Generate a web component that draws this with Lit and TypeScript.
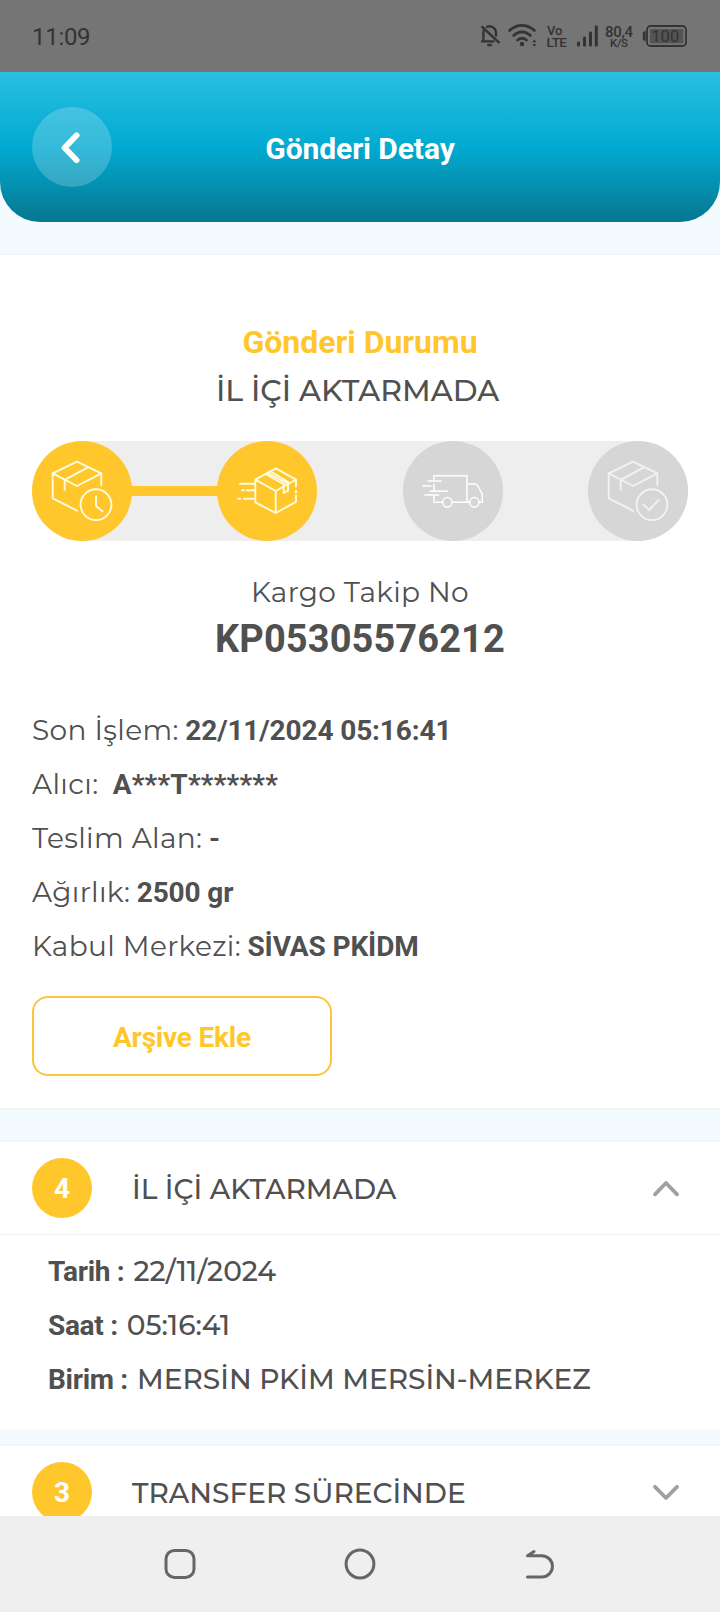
import { LitElement, html, svg, css, nothing } from "lit";
import { customElement, property } from "lit/decorators.js";
import { classMap } from "lit/directives/class-map.js";

const boxBody = svg`
  <path d="M45 69.7 L20.7 57.3 V32.3 L45 20.7 L69.3 32.3 V44.3 M20.7 32.3 L45 45 L69.3 32.3 M56 26.4 L32.7 38.8 V48.7"/>`;

const stepIcons: Record<string, unknown> = {
  waiting: svg`${boxBody}
    <circle cx="64" cy="63.7" r="15.4"/>
    <path d="M64 55.3 V65 L70.4 70.3"/>`,
  moving: svg`
    <path d="M58.7 27.4 L38.3 38.7 V61.3 L58.7 72 L79 60.9 V54.8 M79 45.6 V38.7 L58.7 27.4 M38.3 38.7 L58.7 50 L79 38.7 M58.7 50 V72 M79 50 V51.6"/>
    <path d="M48.7 33 L66.7 43.3 V52 L71 49.7 V41 L53.3 30.3 M50.9 31.8 L69 42"/>
    <path d="M23 42.7 H38 M25 49.3 H27 M29.7 49.3 H38 M21 57.7 H23.2 M27 57.7 H38"/>`,
  truck: svg`
    <path d="M31 39 V34.7 H64 V61.3 M31 43.3 V49.5 M31 54.3 V61.3 H39.5 M49.3 61.3 H66.5 M76 61.3 H79.3 V53.3 L75.6 46 Q74 43 72 43 H64"/>
    <circle cx="44.3" cy="61.3" r="4.7"/>
    <circle cx="71.3" cy="61.3" r="4.7"/>
    <path d="M25.3 40 H38 M20 45 H27.7 M27 50.3 H44.7 M22 54 H35.7"/>`,
  delivered: svg`${boxBody}
    <circle cx="64" cy="63.7" r="15.4"/>
    <path d="M55.7 64 L61.3 69 L70.7 58.9"/>`,
};

@customElement("status-bar")
class StatusBar extends LitElement {
  static styles = css`
    :host { display: flex; justify-content: space-between; height: 72px; background: #757575; color: #333; font-family: Roboto, sans-serif; }
    .clock { padding-left: 32px; font-size: 24px; line-height: 74px; letter-spacing: -0.3px; }
    .icons { display: block; }
    .line { fill: none; stroke: #333; stroke-width: 2.4; stroke-linecap: round; stroke-linejoin: round; }
    .wave { stroke-width: 2.8; }
    .bold { font-weight: 500; }
  `;
  render() {
    return html`
      <span class="clock">11:09</span>
      <svg class="icons" width="260" height="72" fill="#333">
        <g class="line">
          <path d="M23.4 40.5 V32.5 Q23.4 30.6 24.4 29.4 M22 41.4 H33.5 M27 26.8 Q29.3 25.8 31.5 26.6 Q36 28.2 36 33 V35.5 M22.3 27 L38.8 42.3"/>
          <path d="M28.3 45 H31"/>
        </g>
        <g class="line wave">
          <path d="M49.6 30.4 Q62 20.4 74.4 30.4"/>
          <path d="M53.7 35.4 Q62 28.4 70.4 35.4"/>
          <path d="M57.6 40 Q62 36.4 66.4 40"/>
        </g>
        <circle cx="62" cy="44" r="2.2"/>
        <path d="M72.3 42.2 L74.4 39.6 L76.5 42.2 Z M72.3 44 L74.4 46.6 L76.5 44 Z"/>
        <text class="bold" x="87" y="34.6" font-size="13">Vo</text>
        <text class="bold" x="86.5" y="46.7" font-size="13.5" textLength="20.5">LTE</text>
        <rect x="117" y="41.5" width="3" height="5" rx="1.2"/>
        <rect x="123" y="36.5" width="3" height="10" rx="1.2"/>
        <rect x="129" y="31.5" width="3" height="15" rx="1.2"/>
        <rect x="134.8" y="25.5" width="3" height="21" rx="1.2"/>
        <text x="145" y="36.8" font-size="15" class="bold" textLength="28">80,4</text>
        <text x="150" y="47" font-size="11.5" class="bold" textLength="18">K/S</text>
        <rect x="187" y="26" width="39" height="20" rx="3.5" fill="none" stroke="#333" stroke-width="1.8"/>
        <path d="M185.6 31 Q182.8 31 182.8 33.5 V38.5 Q182.8 41 185.6 41 Z"/>
        <rect x="190" y="29" width="33.3" height="14.3" fill="#545454"/>
        <text x="191.2" y="41.8" font-size="16.5" textLength="28">100</text>
      </svg>`;
  }
}

@customElement("page-header")
class PageHeader extends LitElement {
  @property() heading = "";
  static styles = css`
    :host { display: grid; grid-template-columns: 80px 1fr 80px; align-items: center; height: 150px; padding: 0 32px; box-sizing: border-box;
      border-radius: 0 0 40px 40px; background: linear-gradient(#29bfe1 0%, #02aad1 50%, #067790 100%); }
    .back { width: 80px; height: 80px; border-radius: 50%; background: rgba(255, 255, 255, 0.2); }
    .title { color: #fff; font: bold 30px/40px Roboto, sans-serif; text-align: center; letter-spacing: -0.08px; padding-top: 4px; }
  `;
  render() {
    return html`
      <svg class="back" viewBox="0 0 80 80" fill="none" stroke="#fff" stroke-width="5.8" stroke-linecap="round" stroke-linejoin="round">
        <path d="M44.6 28.3 L32.6 40.8 L44.6 53.2"/>
      </svg>
      <span class="title">${this.heading}</span>`;
  }
}

@customElement("progress-steps")
class ProgressSteps extends LitElement {
  static styles = css`
    :host { display: flex; align-items: center; height: 100px; border-radius: 50px; background: #eee; }
    .step { flex: none; width: 100px; height: 100px; border-radius: 50%; background: #d6d6d6; fill: none; stroke: #f2f2f2; stroke-width: 1.9; stroke-linecap: round; stroke-linejoin: round; }
    .bright { stroke: #fff; stroke-width: 1.5; }
    .done { background: #ffc72c; stroke: #fffce0; }
    .link { flex: 1; height: 10px; }
    .link.filled { background: #ffc72c; box-shadow: -1px 0 #ffc72c, 1px 0 #ffc72c; }
  `;
  render() {
    const steps = ["waiting", "moving", "truck", "delivered"];
    return steps.map((name, i) => html`
      ${i ? html`<div class=${classMap({ link: true, filled: i === 1 })}></div>` : nothing}
      <svg class=${classMap({ step: true, done: i < 2, bright: i === 2 })} viewBox="0 0 100 100">${stepIcons[name]}</svg>`);
  }
}

@customElement("movement-card")
class MovementCard extends LitElement {
  @property({ type: Number }) order = 0;
  @property() heading = "";
  @property({ type: Boolean }) open = false;
  @property({ attribute: false }) details: [string, string][] = [];
  static styles = css`
    :host { display: block; background: #fff; border-top: 2px solid #f2f5f6; color: #505050; font-family: Montserrat, Inter, sans-serif; font-size: 28px; font-weight: 500; }
    .head { display: flex; align-items: center; height: 92px; padding: 0 32px; }
    .badge { width: 60px; height: 60px; border-radius: 50%; background: #ffc72c; color: #fff; font: bold 28px/62px Roboto, sans-serif; text-align: center; margin-right: 40px; }
    .name { flex: 1; line-height: 40px; padding-top: 2px; }
    .chevron { width: 44px; height: 44px; fill: none; stroke: #a0a0a0; stroke-width: 3.8; stroke-linecap: round; stroke-linejoin: round; }
    .body { border-top: 1px solid #f2f4f4; padding: 9px 48px 23px; }
    .line { display: flex; gap: 9px; line-height: 54px; height: 54px; white-space: nowrap; align-items: baseline; }
    .label { font-family: Roboto, sans-serif; font-weight: bold; letter-spacing: -0.3px; }
  `;
  render() {
    return html`
      <div class="head">
        <span class="badge">${this.order}</span>
        <span class="name">${this.heading}</span>
        <svg class="chevron" viewBox="0 0 44 44"><path d=${this.open ? "M11 28.3 L22 17 L33 28.3" : "M11 16.8 L22 28 L33 16.8"}/></svg>
      </div>
      ${this.open ? html`<div class="body">
        ${this.details.map(([k, v]) => html`<div class="line"><span class="label">${k} :</span><span>${v}</span></div>`)}
      </div>` : nothing}`;
  }
}

@customElement("nav-bar")
class NavBar extends LitElement {
  static styles = css`
    :host { display: flex; justify-content: center; align-items: center; gap: 140px; height: 96px; background: #efefef; }
    .key { width: 40px; height: 40px; fill: none; stroke: #666; stroke-width: 3; stroke-linecap: round; stroke-linejoin: round; }
  `;
  render() {
    return html`
      <svg class="key" viewBox="0 0 40 40"><rect x="6" y="6.4" width="28" height="27" rx="8.5"/></svg>
      <svg class="key" viewBox="0 0 40 40"><circle cx="20" cy="20" r="13.9"/></svg>
      <svg class="key" viewBox="0 0 40 40"><path d="M7.5 33 H21.8 A10.6 10.6 0 0 0 21.8 11.7 H7.5 L14 7.6"/></svg>`;
  }
}

@customElement("app-root")
class AppRoot extends LitElement {
  static styles = css`
    :host { display: flex; flex-direction: column; width: 720px; height: 1612px; overflow: hidden; background: #f3fbff; color: #505050; font-family: Montserrat, Inter, sans-serif; font-size: 28px; }
    .content { flex: 1; min-height: 0; overflow: hidden; display: flex; flex-direction: column; padding-top: 31px; }
    .summary { background: #fff; border-top: 2px solid #f2f5f6; border-bottom: 2px solid #f2f5f6; padding: 67px 32px 32px; }
    .center { text-align: center; }
    .caption { color: #ffc72c; font: bold 32px/40px Roboto, sans-serif; }
    .state { font-size: 30px; font-weight: 500; line-height: 40px; margin: 9px 0 30px; padding-right: 5px; }
    .track { margin-top: 31px; line-height: 40px; letter-spacing: 0.3px; }
    .code { font: bold 38px/48px Roboto, sans-serif; letter-spacing: 0.1px; margin: 3px 0 40px; }
    .row { display: flex; align-items: baseline; gap: 6.5px; height: 54px; line-height: 54px; white-space: pre; letter-spacing: 0.35px; }
    .value { font-family: Roboto, sans-serif; font-weight: bold; letter-spacing: -0.12px; }
    .value.masked { letter-spacing: 0.18px; }
    .archive { display: block; width: 300px; height: 80px; margin-top: 23px; border: 2px solid #fac638; border-radius: 16px; background: #fff; color: #ffc72c; font: bold 28px Roboto, sans-serif; letter-spacing: -0.2px; padding: 3px 0 0; }
    .first { margin-top: 30px; }
    .next { margin-top: 15px; }
  `;
  render() {
    const rows = [
      ["Son İşlem:", "22/11/2024 05:16:41"],
      ["Alıcı: ", "A***T*******"],
      ["Teslim Alan:", "-"],
      ["Ağırlık:", "2500 gr"],
      ["Kabul Merkezi:", "SİVAS PKİDM"],
    ];
    return html`
      <status-bar></status-bar>
      <page-header heading="Gönderi Detay"></page-header>
      <main class="content">
        <section class="summary">
          <div class="center caption">Gönderi Durumu</div>
          <div class="center state">İL İÇİ AKTARMADA</div>
          <progress-steps></progress-steps>
          <div class="center track">Kargo Takip No</div>
          <div class="center code">KP05305576212</div>
          ${rows.map(([k, v]) => html`<div class="row"><span>${k}</span><span class=${classMap({ value: true, masked: v.includes("*") })}>${v}</span></div>`)}
          <button class="archive">Arşive Ekle</button>
        </section>
        <movement-card class="first" order="4" heading="İL İÇİ AKTARMADA" open
          .details=${[["Tarih", "22/11/2024"], ["Saat", "05:16:41"], ["Birim", "MERSİN PKİM MERSİN-MERKEZ"]]}></movement-card>
        <movement-card class="next" order="3" heading="TRANSFER SÜRECİNDE"></movement-card>
      </main>
      <nav-bar></nav-bar>`;
  }
}
